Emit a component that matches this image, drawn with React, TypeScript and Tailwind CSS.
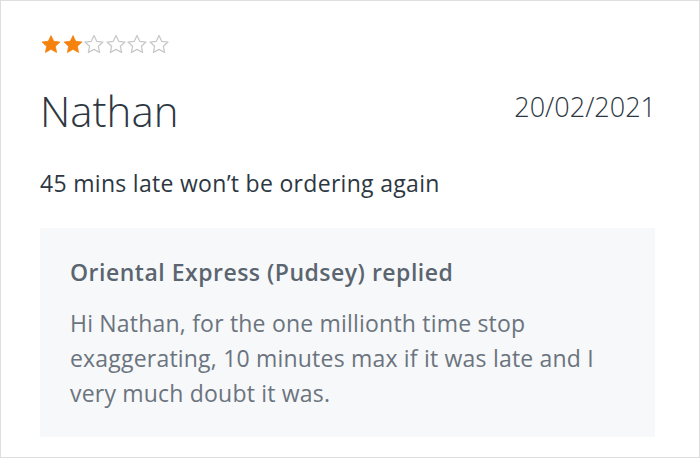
import React from "react"

// Single review card: rating, reviewer, comment and the restaurant's reply

const FONT = { fontFamily: "'Open Sans', 'Liberation Sans', sans-serif" }

function Star({ filled }: { filled: boolean }) {
  return (
    <svg width="20" height="19" viewBox="1.5 2 21 20" className="block">
      <path
        d="M12 2.6l2.85 6 6.6.8-4.85 4.5 1.3 6.5L12 17.1l-5.9 3.3 1.3-6.5-4.85-4.5 6.6-.8z"
        fill={filled ? "#f5820d" : "none"}
        stroke={filled ? "#f5820d" : "#c7c7c7"}
        strokeWidth={filled ? 0.8 : 1.3}
        strokeLinejoin="round"
      />
    </svg>
  )
}

export default function App() {
  const rating = 2
  return (
    <div
      style={FONT}
      className="w-[700px] h-[458px] bg-white border border-[#dedede] pl-[39px] pr-[43px] pt-[34px]"
    >
      <div className="flex gap-[1.5px] pl-[1px]">
        {[0, 1, 2, 3, 4, 5].map(i => (
          <Star key={i} filled={i < rating} />
        ))}
      </div>

      <div className="flex items-start justify-between mt-[36px]">
        <h1 className="text-[42px] leading-none font-light text-[#2d3742]">Nathan</h1>
        <span className="mt-[3px] text-[27px] leading-none font-light text-[#2d3742]">20/02/2021</span>
      </div>

      <p className="mt-[40px] text-[23px] leading-none font-normal tracking-[0.3px] text-[#2d3742]">
        45 mins late won’t be ordering again
      </p>

      <div className="mt-[33px] w-[615px] bg-[#f7f8fa] pt-[33px] pb-[26px] pl-[30px] pr-[28px]">
        <h2 className="text-[23px] leading-none font-semibold tracking-[0.5px] text-[#5b6570]">
          Oriental Express (Pudsey) replied
        </h2>
        <p className="mt-[22px] text-[23px] leading-[35px] font-normal tracking-[0.2px] text-[#6b747e]">
          Hi Nathan, for the one millionth time stop exaggerating, 10 minutes max if it was late and I very much doubt it was.
        </p>
      </div>
    </div>
  )
}
